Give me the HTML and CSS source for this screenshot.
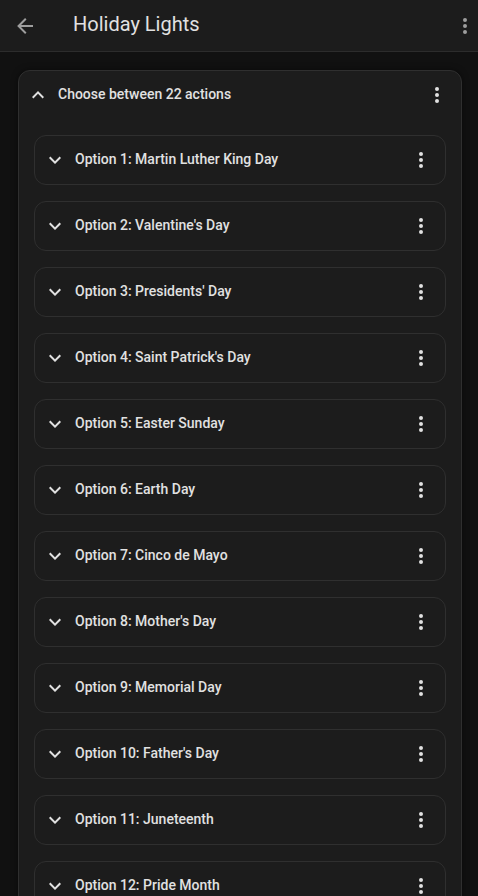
FILE: index.html
```html
<!DOCTYPE html>
<html>
<head>
<meta charset="utf-8">
<link rel="stylesheet" href="styles.css">
</head>
<body>
<header class="topbar">
  <svg class="icon back" viewBox="0 0 24 24"><path d="M20,11V13H8L13.5,18.5L12.08,19.92L4.16,12L12.08,4.08L13.5,5.5L8,11H20Z"/></svg>
  <div class="title">Holiday Lights</div>
  <svg class="icon topmenu" viewBox="0 0 24 24"><path d="M12,16A2,2 0 0,1 14,18A2,2 0 0,1 12,20A2,2 0 0,1 10,18A2,2 0 0,1 12,16M12,10A2,2 0 0,1 14,12A2,2 0 0,1 12,14A2,2 0 0,1 10,12A2,2 0 0,1 12,10M12,4A2,2 0 0,1 14,6A2,2 0 0,1 12,8A2,2 0 0,1 10,6A2,2 0 0,1 12,4Z"/></svg>
</header>
<main class="content">
  <section class="card outer">
    <div class="row">
      <svg class="icon" viewBox="0 0 24 24"><path d="M7.41,15.41L12,10.83L16.59,15.41L18,14L12,8L6,14L7.41,15.41Z"/></svg>
      <span class="label">Choose between 22 actions</span>
      <svg class="icon menu" viewBox="0 0 24 24"><path d="M12,16A2,2 0 0,1 14,18A2,2 0 0,1 12,20A2,2 0 0,1 10,18A2,2 0 0,1 12,16M12,10A2,2 0 0,1 14,12A2,2 0 0,1 12,14A2,2 0 0,1 10,12A2,2 0 0,1 12,10M12,4A2,2 0 0,1 14,6A2,2 0 0,1 12,8A2,2 0 0,1 10,6A2,2 0 0,1 12,4Z"/></svg>
    </div>
    <div class="options" id="options"></div>
  </section>
</main>
<script>
const names = ["Martin Luther King Day","Valentine's Day","Presidents' Day","Saint Patrick's Day","Easter Sunday","Earth Day","Cinco de Mayo","Mother's Day","Memorial Day","Father's Day","Juneteenth","Pride Month"];
const chev = '<svg class="icon" viewBox="0 0 24 24"><path d="M7.41,8.58L12,13.17L16.59,8.58L18,10L12,16L6,10L7.41,8.58Z"/></svg>';
const dots = '<svg class="icon menu" viewBox="0 0 24 24"><path d="M12,16A2,2 0 0,1 14,18A2,2 0 0,1 12,20A2,2 0 0,1 10,18A2,2 0 0,1 12,16M12,10A2,2 0 0,1 14,12A2,2 0 0,1 12,14A2,2 0 0,1 10,12A2,2 0 0,1 12,10M12,4A2,2 0 0,1 14,6A2,2 0 0,1 12,8A2,2 0 0,1 10,6A2,2 0 0,1 12,4Z"/></svg>';
const box = document.getElementById('options');
names.forEach((n, i) => {
  const d = document.createElement('div');
  d.className = 'card inner';
  d.innerHTML = '<div class="row">' + chev + '<span class="label">Option ' + (i + 1) + ': ' + n + '</span>' + dots + '</div>';
  box.appendChild(d);
});
</script>
</body>
</html>
```

FILE: styles.css
```css
html, body {
  margin: 0;
  padding: 0;
  height: 100%;
  overflow: hidden;
  background: #111111;
  font-family: Roboto, "Noto Sans", sans-serif;
  color: #e1e1e1;
}
.icon {
  width: 24px;
  height: 24px;
  flex: none;
  fill: #e1e1e1;
}
.topbar {
  height: 51px;
  border-bottom: 1px solid #2c2c2c;
  background: #1c1c1c;
  display: flex;
  align-items: center;
  padding: 0 1px 0 13px;
}
.topbar .icon {
  fill: #9e9e9e;
}
.title {
  margin-left: 36px;
  font-size: 20px;
  font-weight: 400;
  flex: 1;
  color: #e1e1e1;
  padding-bottom: 3px;
}
.content {
  padding: 18px 16px 0 18px;
}
.card {
  background: #1c1c1c;
  border: 1px solid #2f2f2f;
  border-radius: 12px;
}
.outer {
  width: 442px;
  box-shadow: 0 0 6px rgba(0, 0, 0, 0.5);
}
.row {
  display: flex;
  align-items: center;
  height: 48px;
  padding: 0 12px 0 7px;
}
.label {
  flex: 1;
  margin-left: 8px;
  font-size: 14px;
  font-weight: 500;
  padding-bottom: 3px;
}
.options {
  display: flex;
  flex-direction: column;
  gap: 16px;
  padding: 16px 15px 16px 15px;
}
.inner .row {
  padding: 0 12px 0 8px;
}
```
